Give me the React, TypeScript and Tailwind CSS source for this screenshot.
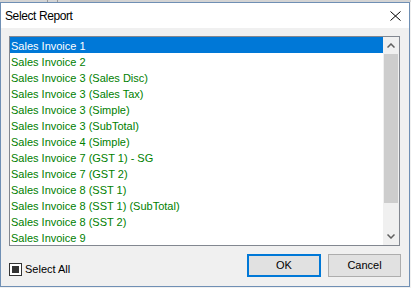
const reports = [
  'Sales Invoice 1',
  'Sales Invoice 2',
  'Sales Invoice 3 (Sales Disc)',
  'Sales Invoice 3 (Sales Tax)',
  'Sales Invoice 3 (Simple)',
  'Sales Invoice 3 (SubTotal)',
  'Sales Invoice 4 (Simple)',
  'Sales Invoice 7 (GST 1) - SG',
  'Sales Invoice 7 (GST 2)',
  'Sales Invoice 8 (SST 1)',
  'Sales Invoice 8 (SST 1) (SubTotal)',
  'Sales Invoice 8 (SST 2)',
  'Sales Invoice 9',
];

const ui = { fontFamily: '"Liberation Sans", Arial, sans-serif' };

export default function App() {
  const selected = 0;

  return (
    <div className="w-[411px] h-[288px] bg-[#f0f0f0] overflow-hidden" style={ui}>
      {/* window behind */}
      <div className="h-[2px] bg-[#d4d4d4] flex">
        <div className="ml-[47px] w-px bg-[#9a9a9a]" />
        <div className="ml-[9px] w-px bg-[#9a9a9a]" />
        <div className="ml-[12px] w-[40px] bg-[#c4c4c4]" />
      </div>

      <div className="w-[410px] h-[285px] border border-[#6f8fb4] flex flex-col bg-[#f0f0f0]">
        {/* title bar */}
        <div className="h-[25px] bg-white flex items-center justify-between shrink-0">
          <span className="pl-[4px] pt-[1px] text-[12px] tracking-[-0.4px] text-black">Select Report</span>
          <svg width="11" height="10" viewBox="0 0 11 10" className="mr-[8px] mt-[1px]">
            <path d="M0.5 0.5 L10.5 9.5 M10.5 0.5 L0.5 9.5" stroke="#000" strokeWidth="1" fill="none" />
          </svg>
        </div>

        <div className="flex-1 flex flex-col px-[8px] pt-[8px]">
          {/* list box */}
          <div className="h-[210px] w-[391px] border border-[#828790] bg-white flex">
            <div className="flex-1 flex flex-col">
              {reports.map((r, i) => (
                <div
                  key={r}
                  className={`h-[16px] leading-[16px] pt-[1px] pl-[1px] text-[11px] whitespace-nowrap ${
                    i === selected ? 'bg-[#0078d7] text-white' : 'text-[#008000]'
                  }`}
                >
                  {r}
                </div>
              ))}
            </div>
            {/* scrollbar */}
            <div className="w-[16px] flex flex-col bg-[#f0f0f0]">
              <div className="h-[17px] flex items-center justify-center">
                <svg width="8" height="5" viewBox="0 0 8 5">
                  <path d="M0.5 4.5 L4 1 L7.5 4.5" stroke="#606060" strokeWidth="1.5" fill="none" />
                </svg>
              </div>
              <div className="h-[149px] mx-[1px] bg-[#cdcdcd]" />
              <div className="flex-1" />
              <div className="h-[17px] flex items-center justify-center">
                <svg width="8" height="5" viewBox="0 0 8 5">
                  <path d="M0.5 0.5 L4 4 L7.5 0.5" stroke="#606060" strokeWidth="1.5" fill="none" />
                </svg>
              </div>
            </div>
          </div>

          {/* footer */}
          <div className="flex items-start mt-[8px]">
            <label className="flex items-center mt-[7px] gap-[3px]">
              <span className="w-[13px] h-[13px] border border-[#333333] bg-white flex items-center justify-center">
                <span className="w-[7px] h-[7px] bg-[#333333]" />
              </span>
              <span className="text-[11px] text-black">Select All</span>
            </label>
            <div className="flex-1" />
            <button className="w-[74px] h-[23px] border-2 border-[#0078d7] bg-[#e1e1e1] text-[11px] text-black">
              OK
            </button>
            <button className="ml-[7px] w-[73px] h-[23px] border border-[#adadad] bg-[#e1e1e1] text-[11px] text-black">
              Cancel
            </button>
          </div>
        </div>
      </div>
    </div>
  );
}
